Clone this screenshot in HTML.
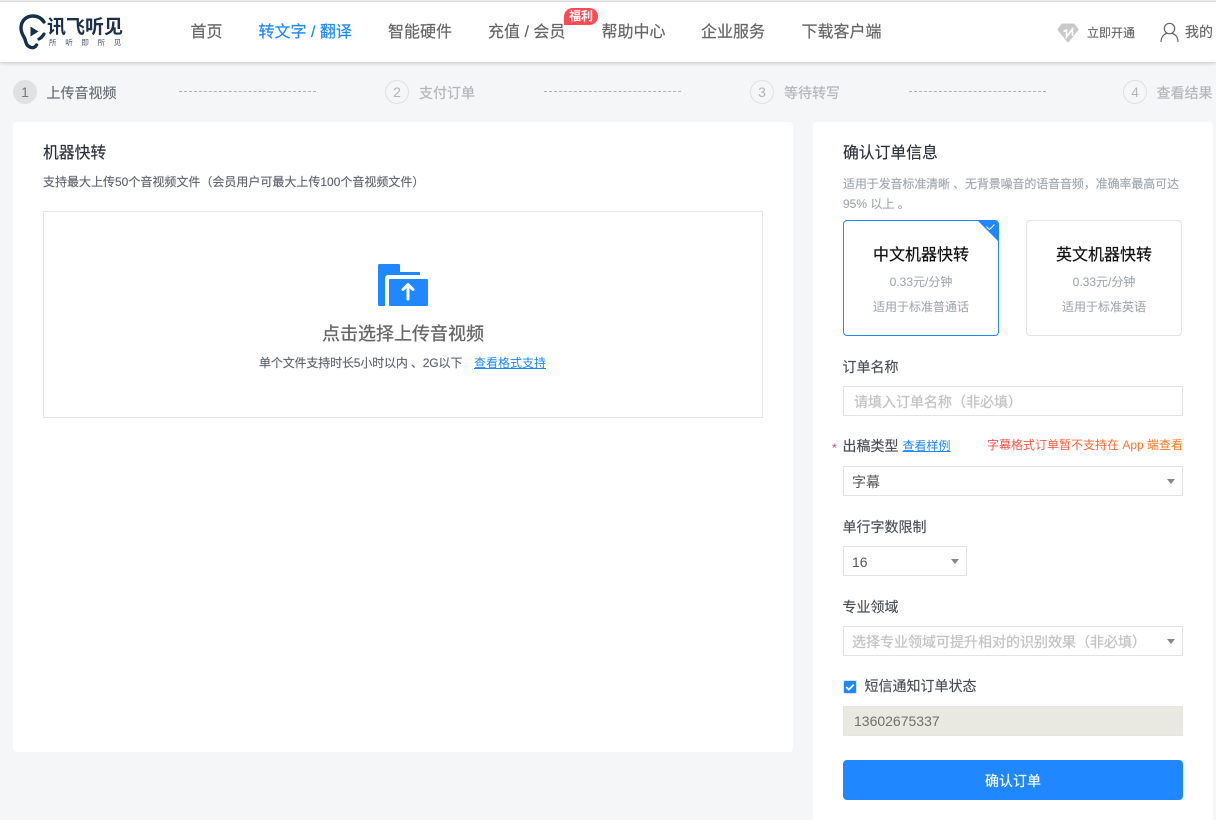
<!DOCTYPE html>
<html lang="zh"><head><meta charset="utf-8"><title>讯飞听见</title>
<style>
*{box-sizing:border-box;margin:0;padding:0}
html,body{width:1216px;height:820px;overflow:hidden;background:#f4f6f8;font-family:"Liberation Sans","Noto Sans CJK SC",sans-serif;color:#333}
.a{position:absolute;white-space:nowrap;line-height:20px}
.s{-webkit-text-stroke:.15px}
#head{position:absolute;left:0;top:1px;width:1216px;height:61px;background:#fff;box-shadow:0 1px 4px rgba(0,0,0,.2);border-top:1px solid #ddd}
.nav{font-size:16px;color:#666;top:23px;-webkit-text-stroke:.2px}
.step{font-size:14px;color:#b3b6ba;top:83px;-webkit-text-stroke:.2px}
.num{position:absolute;top:80px;width:24px;height:24px;border-radius:50%;border:1px solid #dfe1e3;color:#b3b6ba;font-size:14px;text-align:center;line-height:22px}
.dash{position:absolute;top:91px;width:137px;border-top:1px dashed #aeb0b3;height:0}
.card{position:absolute;background:#fff;border-radius:4px}
.label{font-size:14px;color:#4a4f55;-webkit-text-stroke:.15px}
.box{position:absolute;background:#fff;border:1px solid #e3e3e3;height:30px;font-size:14px;line-height:30px;padding-left:8px;color:#555}
.ph{color:#c4c4c4;-webkit-text-stroke:.3px}
.tri{position:absolute;width:0;height:0;border-left:4px solid transparent;border-right:4px solid transparent;border-top:5px solid #888}
.opt{position:absolute;top:220px;width:156px;height:116px;border:1px solid #e3e3e3;border-radius:4px;text-align:center;overflow:hidden}
.opt b{display:block;font-weight:400;font-size:16px;color:#111;margin-top:24px;line-height:22px;-webkit-text-stroke:.2px}
.opt span{display:block;font-size:12px;color:#a3a8ae;line-height:16px;margin-top:7px;-webkit-text-stroke:.1px}
.opt span+span{margin-top:9px}
</style></head><body>
<div id="head"></div>

<svg class="a" style="left:19px;top:14px" width="28" height="36" viewBox="0 0 28 36">
<path d="M25 8C22 3.500 18 2 14 2 7 2 2 7 2 14c0 5 2 7 3.500 10 1.500 3 1 8 6.500 9.500 2.500.6 4.500-.5 5.500-2.500" fill="none" stroke="#15304a" stroke-width="3.400" stroke-linecap="round"/>
<path d="M11.500 12.500v10l8-5z" fill="#15304a"/>
<path d="M25 20c-1.500 2.500-3 4-5 5" fill="none" stroke="#15304a" stroke-width="3.200" stroke-linecap="round"/>
</svg>
<div class="a" style="left:47px;top:16px;font-size:19px;line-height:24px;color:#1c3148;font-weight:700">讯飞听见</div>
<div class="a" style="left:49px;top:38px;font-size:7.500px;line-height:10px;color:#47566a;letter-spacing:8.700px">所听即所见</div>

<div class="a nav" style="left:190.500px">首页</div>
<div class="a nav" style="left:258.500px;color:#1f87ff;">转文字 / 翻译</div>
<div class="a nav" style="left:388px">智能硬件</div>
<div class="a nav" style="left:488px">充值 / 会员</div>
<div class="a" style="left:564px;top:8px;width:34px;height:17px;background:#ff4b55;border-radius:9px 9px 9px 0;color:#fff;font-size:12px;line-height:17px;text-align:center;font-weight:700">福利</div>
<div class="a nav" style="left:601.500px">帮助中心</div>
<div class="a nav" style="left:701px">企业服务</div>
<div class="a nav" style="left:801.500px">下载客户端</div>

<svg class="a" style="left:1057px;top:23px" width="22" height="20" viewBox="0 0 22 20">
<path d="M5.500.5h11a1 1 0 0 1 .8.400l4 5a1 1 0 0 1 0 1.200L11.800 19a1 1 0 0 1-1.600 0L.7 7.100a1 1 0 0 1 0-1.200l4-5a1 1 0 0 1 .8-.4z" fill="#c9c9c9"/>
<path d="M6.500 8.500l3-1.500v7l6-8v7" fill="none" stroke="#fff" stroke-width="1.600"/>
</svg>
<div class="a s" style="left:1087px;top:23px;font-size:12px;color:#666">立即开通</div>
<svg class="a" style="left:1160px;top:22px" width="19" height="20" viewBox="0 0 19 20">
<circle cx="9.500" cy="6.500" r="5.200" fill="none" stroke="#666" stroke-width="1.200"/>
<path d="M1 20c0-5 3-8 6-8.600M18 20c0-5-3-8-6-8.600" fill="none" stroke="#666" stroke-width="1.200"/>
</svg>
<div class="a s" style="left:1185px;top:22px;font-size:14px;color:#666">我的</div>

<div class="num" style="left:13px;background:#dfe1e3;border-color:#dfe1e3;color:#777">1</div>
<div class="a step" style="left:46.500px;color:#6b7077">上传音视频</div>
<div class="dash" style="left:179px"></div>
<div class="num" style="left:385px">2</div>
<div class="a step" style="left:419px">支付订单</div>
<div class="dash" style="left:544px"></div>
<div class="num" style="left:750px">3</div>
<div class="a step" style="left:784px">等待转写</div>
<div class="dash" style="left:909px"></div>
<div class="num" style="left:1123px">4</div>
<div class="a step" style="left:1156.500px">查看结果</div>

<div class="card" style="left:13px;top:122px;width:780px;height:630px"></div>
<div class="a s" style="left:43px;top:143px;font-size:15.800px;line-height:22px;color:#2b3138">机器快转</div>
<div class="a s" style="left:43px;top:172px;font-size:12px;color:#60666d">支持最大上传50个音视频文件（会员用户可最大上传100个音视频文件）</div>
<div class="a" style="left:43px;top:211px;width:720px;height:207px;border:1px solid #e5e5e5"></div>
<svg class="a" style="left:378px;top:264px" width="50" height="42" viewBox="0 0 50 42">
<path d="M1.500 0H21a1 1 0 0 1 1 1v7h19a1 1 0 0 1 1 1v2H10a3 3 0 0 0-3 3v28H1.500A1.500 1.500 0 0 1 0 40.500v-39A1.500 1.500 0 0 1 1.500 0z" fill="#1f87ff"/>
<rect x="11" y="15" width="39" height="27" rx="1" fill="#1f87ff"/>
<path d="M30 35V21M25 25.500l5-5 5 5" fill="none" stroke="#fff" stroke-width="3" stroke-linecap="round" stroke-linejoin="round"/>
</svg>
<div class="a" style="left:322px;top:322px;width:162px;font-size:18px;line-height:24px;color:#666;text-align:center;-webkit-text-stroke:.3px">点击选择上传音视频</div>
<div class="a s" style="left:259px;top:353px;font-size:12px;color:#60666d;letter-spacing:-.15px">单个文件支持时长5小时以内 、2G以下</div>
<div class="a" style="left:474px;top:353px;font-size:12px;color:#1f87ff;text-decoration:underline">查看格式支持</div>

<div class="card" style="left:813px;top:122px;width:400px;height:698px;border-radius:4px 4px 0 0"></div>
<div class="a s" style="left:843px;top:143px;font-size:15.800px;line-height:22px;color:#2b3138">确认订单信息</div>
<div class="a s" style="left:843px;top:174px;font-size:12px;color:#a3a8ae;letter-spacing:-.12px">适用于发音标准清晰 、无背景噪音的语音音频，准确率最高可达</div>
<div class="a s" style="left:843px;top:194px;font-size:12px;color:#a3a8ae">95% 以上 。</div>

<div class="opt" style="left:843px;border-color:#1f87ff">
<b>中文机器快转</b><span>0.33元/分钟</span><span>适用于标准普通话</span>
<svg style="position:absolute;right:0;top:0" width="20" height="20" viewBox="0 0 20 20"><path d="M0 0h20v20z" fill="#1f87ff"/><path d="M8.500 5.500l3 3 5-5" fill="none" stroke="#fff" stroke-width="1"/></svg>
</div>
<div class="opt" style="left:1026px">
<b>英文机器快转</b><span>0.33元/分钟</span><span>适用于标准英语</span>
</div>

<div class="a label" style="left:842.500px;top:357px">订单名称</div>
<div class="box ph" style="left:843px;top:386px;width:340px;padding-left:10px">请填入订单名称（非必填）</div>

<div class="a" style="left:832px;top:438px;font-size:12px;color:#f5405c">*</div>
<div class="a label" style="left:842.500px;top:436px">出稿类型</div>
<div class="a" style="left:902.500px;top:436px;font-size:12px;color:#1f87ff;text-decoration:underline">查看样例</div>
<div class="a" style="left:987px;top:435px;font-size:12px;background:linear-gradient(90deg,#ff4a4a,#ff7a1a);-webkit-background-clip:text;background-clip:text;color:transparent">字幕格式订单暂不支持在 App 端查看</div>
<div class="box" style="left:843px;top:466px;width:340px">字幕</div><div class="tri" style="left:1167px;top:479px"></div>

<div class="a label" style="left:842.500px;top:517px">单行字数限制</div>
<div class="box" style="left:843px;top:546px;width:124px">16</div><div class="tri" style="left:951px;top:559px"></div>

<div class="a label" style="left:842.500px;top:597px">专业领域</div>
<div class="box ph" style="left:843px;top:626px;width:340px;padding-left:8px">选择专业领域可提升相对的识别效果（非必填）</div><div class="tri" style="left:1167px;top:639px"></div>

<svg class="a" style="left:843px;top:680px" width="14" height="14" viewBox="0 0 14 14"><rect x="0.500" y="0.500" width="13" height="13" rx="1.500" fill="#1f87ff" stroke="#cfe2fb"/><path d="M3.200 7l2.600 2.600 5-5" fill="none" stroke="#fff" stroke-width="1.800"/></svg>
<div class="a label" style="left:864.500px;top:676px">短信通知订单状态</div>
<div class="box" style="left:843px;top:706px;width:340px;background:#e9e8e1;border-color:#e6e5df;padding-left:10px;color:#70706c;font-size:14px;line-height:29px">13602675337</div>
<div class="a s" style="left:843px;top:760px;width:340px;height:40px;background:#1f87ff;border-radius:4px;color:#fff;font-size:14px;line-height:42px;text-align:center">确认订单</div>
</body></html>
